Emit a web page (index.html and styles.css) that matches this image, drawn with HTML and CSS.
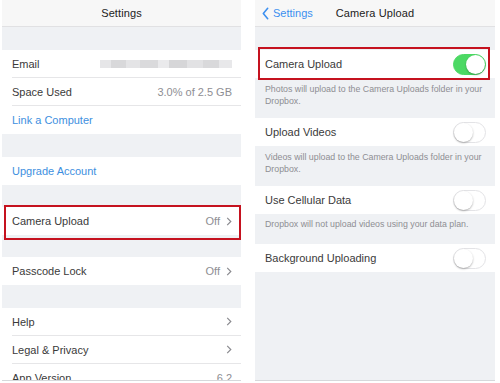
FILE: index.html
```html
<!DOCTYPE html>
<html lang="en">
<head>
  <meta charset="UTF-8" />
  <title>Settings - Camera Upload</title>
  <link rel="stylesheet" href="styles.css">
</head>
<body>
  <div class="screens">
    <!-- Settings screen -->
    <div class="phone phone-left">
      <div class="navbar">
        <span class="nav-title">Settings</span>
      </div>
      <div class="spacer"></div>
      <div class="group">
        <div class="cell">
          <span class="label">Email</span>
          <span class="blurred"></span>
        </div>
        <div class="cell">
          <span class="label">Space Used</span>
          <span class="value">3.0% of 2.5 GB</span>
        </div>
        <div class="cell">
          <span class="label link">Link a Computer</span>
        </div>
      </div>
      <div class="spacer"></div>
      <div class="group">
        <div class="cell">
          <span class="label link">Upgrade Account</span>
        </div>
      </div>
      <div class="spacer spacer-sm"></div>
      <div class="group">
        <div class="cell highlight highlight-left">
          <span class="label">Camera Upload</span>
          <span class="value">Off</span>
          <svg class="chevron" viewBox="0 0 6 10"><path d="M1 1l4 4-4 4" /></svg>
        </div>
      </div>
      <div class="spacer spacer-sm"></div>
      <div class="group">
        <div class="cell">
          <span class="label">Passcode Lock</span>
          <span class="value">Off</span>
          <svg class="chevron" viewBox="0 0 6 10"><path d="M1 1l4 4-4 4" /></svg>
        </div>
      </div>
      <div class="spacer"></div>
      <div class="group">
        <div class="cell">
          <span class="label">Help</span>
          <svg class="chevron" viewBox="0 0 6 10"><path d="M1 1l4 4-4 4" /></svg>
        </div>
        <div class="cell">
          <span class="label">Legal &amp; Privacy</span>
          <svg class="chevron" viewBox="0 0 6 10"><path d="M1 1l4 4-4 4" /></svg>
        </div>
        <div class="cell">
          <span class="label">App Version</span>
          <span class="value">6.2</span>
        </div>
      </div>
    </div>

    <!-- Camera Upload screen -->
    <div class="phone phone-right">
      <div class="navbar">
        <span class="back">
          <svg class="back-icon" viewBox="0 0 8 14"><path d="M6.5 1L1.5 7l5 6" /></svg>
          Settings
        </span>
        <span class="nav-title">Camera Upload</span>
      </div>
      <div class="spacer"></div>
      <div class="group">
        <div class="cell highlight highlight-right">
          <span class="label">Camera Upload</span>
          <span class="switch on"></span>
        </div>
      </div>
      <p class="footer">Photos will upload to the Camera Uploads folder in your Dropbox.</p>
      <div class="group">
        <div class="cell">
          <span class="label">Upload Videos</span>
          <span class="switch"></span>
        </div>
      </div>
      <p class="footer">Videos will upload to the Camera Uploads folder in your Dropbox.</p>
      <div class="group">
        <div class="cell">
          <span class="label">Use Cellular Data</span>
          <span class="switch"></span>
        </div>
      </div>
      <p class="footer footer-short">Dropbox will not upload videos using your data plan.</p>
      <div class="group">
        <div class="cell">
          <span class="label">Background Uploading</span>
          <span class="switch"></span>
        </div>
      </div>
    </div>
  </div>
</body>
</html>
```

FILE: styles.css
```css
/* Reset */
* {
  box-sizing: border-box;
  margin: 0;
  padding: 0;
}
body {
  font-family: 'Liberation Sans', Arial, sans-serif;
  background: #fff;
  width: 500px;
  height: 383px;
  overflow: hidden;
}
.screens {
  display: flex;
  gap: 14px;
  padding-left: 2px;
}
/* Phone screen */
.phone {
  width: 239px;
  height: 381px;
  background: #eff1f4;
  overflow: hidden;
  border-bottom: 1px solid #d6d8db;
  display: flex;
  flex-direction: column;
}
.phone-right {
  width: 240px;
}
.navbar {
  flex: none;
  height: 27px;
  background: #f7f7f7;
  border-bottom: 1px solid #e1e1e3;
  display: flex;
  align-items: center;
  justify-content: center;
  position: relative;
}
.nav-title {
  font-size: 11px;
  color: #222;
  letter-spacing: 0.1px;
}
.back {
  position: absolute;
  left: 7px;
  top: 0;
  bottom: 0;
  display: flex;
  align-items: center;
  gap: 4px;
  color: #3b8ff0;
  font-size: 11px;
}
.back-icon {
  width: 7px;
  height: 13px;
  fill: none;
  stroke: #3b8ff0;
  stroke-width: 1.8;
  stroke-linecap: round;
  stroke-linejoin: round;
}
/* Sections */
.spacer {
  flex: none;
  height: 23px;
}
.spacer-sm {
  height: 22px;
}
.group {
  flex: none;
  background: #fff;
}
.cell {
  height: 28px;
  margin-left: 10px;
  padding-right: 9px;
  display: flex;
  align-items: center;
  gap: 6px;
  font-size: 11px;
  border-bottom: 1px solid #e6e6e8;
  position: relative;
}
.group .cell:last-child {
  border-bottom: none;
}
.label {
  color: #3a3a3a;
  flex: 1;
}
.link {
  color: #3d8fe0;
}
.value {
  color: #8e8e93;
}
.chevron {
  width: 6px;
  height: 9px;
  fill: none;
  stroke: #8a8a8f;
  stroke-width: 1.3;
}
/* Blurred email */
.blurred {
  width: 132px;
  height: 8px;
  background: linear-gradient(90deg, #e6e6e8 0 8%, #d8d8da 8% 20%, #e4e4e6 20% 30%, #dadadc 30% 44%, #eaeaec 44% 52%, #d6d6d8 52% 66%, #e2e2e4 66% 78%, #d9d9db 78% 90%, #e8e8ea 90%);
  filter: blur(0.6px);
}
/* Red highlight box */
.highlight::after {
  content: "";
  position: absolute;
  border: 2px solid #c5121f;
  pointer-events: none;
}
.highlight-left::after {
  left: -8px;
  right: 0;
  top: -2px;
  bottom: -5px;
}
.highlight-right::after {
  left: -7px;
  right: 5px;
  top: -3px;
  bottom: -2px;
}
/* Toggles */
.switch {
  width: 33px;
  height: 21px;
  border-radius: 11px;
  border: 1px solid #e3e3e6;
  background: #fff;
  position: relative;
  flex: none;
}
.switch::before {
  content: "";
  position: absolute;
  top: 0;
  left: 0;
  width: 19px;
  height: 19px;
  border-radius: 50%;
  background: #fff;
  box-shadow: 0 1px 2px rgba(0, 0, 0, 0.3);
}
.switch.on {
  background: #4cd964;
  border-color: #4cd964;
}
.switch.on::before {
  left: auto;
  right: 0;
}
/* Footers */
.footer {
  flex: none;
  height: 40px;
  padding: 5px 8px 0 10px;
  font-size: 8.8px;
  line-height: 12px;
  color: #8e8e93;
}
.footer-short {
  height: 30px;
  padding-top: 4px;
}
```
